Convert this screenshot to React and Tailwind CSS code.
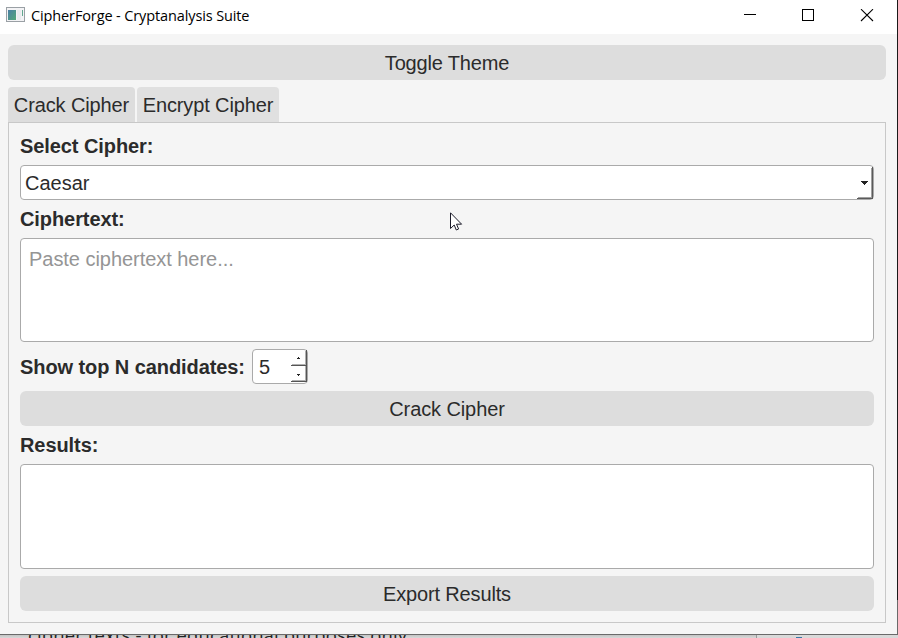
function Button({ children, className = '' }) {
  return (
    <button className={`flex h-[35px] w-full shrink-0 items-center justify-center rounded-[6px] bg-[#dddddd] pt-px text-[20px] leading-none ${className}`}>
      {children}
    </button>
  );
}

function Label({ children, className = '' }) {
  return <div className={`shrink-0 text-[20px] font-bold leading-[23px] tracking-[-0.08px] ${className}`}>{children}</div>;
}

function TitleBar() {
  return (
    <header className="flex h-[34px] shrink-0 items-start bg-white text-black">
      <svg className="ml-[6px] mt-[7px] shrink-0" width="19" height="16" shapeRendering="crispEdges">
        <defs>
          <linearGradient id="appIcon" x1="0" y1="0" x2="1" y2="1">
            <stop offset="0" stopColor="#4a7fa5" />
            <stop offset="1" stopColor="#52a878" />
          </linearGradient>
        </defs>
        <rect x="0.5" y="0.5" width="18" height="14" fill="#f3f3f5" stroke="#9aa0a5" />
        <rect x="2" y="3" width="8" height="10" fill="url(#appIcon)" />
        <rect x="11" y="3" width="4" height="10" fill="#e9ebee" />
        <rect x="16" y="3" width="1" height="6" fill="#62a890" />
      </svg>
      <div className="ml-[6px] mt-[6px] whitespace-nowrap font-['Open_Sans',sans-serif] text-[14.5px] leading-[20px] tracking-[-0.12px]">
        CipherForge - Cryptanalysis Suite
      </div>
      <svg className="ml-auto mr-[24px] mt-[9px] shrink-0" width="130" height="13" shapeRendering="crispEdges" fill="none" stroke="#000">
        <path d="M0 5.5H12" />
        <rect x="58.5" y="0.5" width="11" height="11" />
        <path d="M117 0.2L129 12M129 0.2L117 12" shapeRendering="auto" strokeWidth="1.1" />
      </svg>
    </header>
  );
}

export default function App() {
  return (
    <div className="flex h-[638px] w-[898px] flex-col overflow-hidden bg-[#e0e0e0] font-['Liberation_Sans',Arial,sans-serif] text-[#2b2b2b]">
      <div className="relative flex h-[635px] shrink-0 flex-col border-b border-[#6a6a6a] bg-[#f5f5f5]">
        <TitleBar />
        <main className="flex flex-1 flex-col pb-[11px] pl-[8px] pr-[12px] pt-[11px]">
          <Button className="tracking-[-0.17px]">Toggle Theme</Button>
          <nav className="mt-[7px] flex h-[35px] shrink-0 gap-[2px] text-[20px] leading-none tracking-[-0.12px]">
            <div className="flex w-[127px] items-center justify-center whitespace-nowrap rounded-t-[4px] bg-[#dddddd] pt-px">Crack Cipher</div>
            <div className="flex w-[142px] items-center justify-center whitespace-nowrap rounded-t-[4px] bg-[#e0e0e0] pt-px">Encrypt Cipher</div>
          </nav>
          <section className="flex flex-1 flex-col border border-[#c8c8c8] px-[11px] pt-[12px]">
            <Label>Select Cipher:</Label>
            <div className="mt-[7px] flex h-[35px] shrink-0 items-center rounded-[4px] border border-[#aaaaaa] bg-white pl-[4px] pt-px text-[20px] leading-none">
              Caesar
              <svg className="-mr-px -mt-px ml-auto shrink-0" width="17" height="33" shapeRendering="crispEdges">
                <path d="M4 15h7v1h-1v1h-1v1h-1v1h-1v-1h-1v-1h-1v-1h-1z" fill="#222" />
                <path d="M1 31.5H15M14.5 2V31" stroke="#a0a0a0" />
                <path d="M0 32.5H16M15.5 1V33" stroke="#5a5a5a" />
              </svg>
            </div>
            <Label className="mt-[8px]">Ciphertext:</Label>
            <div className="mt-[7px] h-[104px] shrink-0 rounded-[4px] border border-[#aaaaaa] bg-white pl-[8px] pt-[9px] text-[20px] leading-[23px] tracking-[-0.04px] text-[#959595]">
              Paste ciphertext here...
            </div>
            <div className="mt-[7px] flex h-[35px] shrink-0 items-center">
              <Label className="w-[232px] whitespace-nowrap pt-[2px]">Show top N candidates:</Label>
              <div className="flex h-[35px] w-[56px] items-center rounded-[4px] border border-[#aaaaaa] bg-white pl-[6px] text-[20px] leading-none">
                <span className="pt-px">5</span>
                <svg className="-mr-px ml-auto shrink-0" width="17" height="33" shapeRendering="crispEdges">
                  <path d="M7 7h1v1h1v1h-3v-1h1zM6 24h3v1h-1v1h-1v-1h-1z" fill="#222" />
                  <path d="M1 14.5H15M1 30.5H15M14.5 1V31" stroke="#b0b0b0" />
                  <path d="M0 15.5H16M0 31.5H16M15.5 0V32" stroke="#555" />
                </svg>
              </div>
            </div>
            <Button className="mt-[7px] tracking-[-0.1px]">Crack Cipher</Button>
            <Label className="mt-[8px]">Results:</Label>
            <div className="mt-[7px] h-[105px] shrink-0 rounded-[4px] border border-[#aaaaaa] bg-white" />
            <Button className="mt-[7px] tracking-[-0.15px]">Export Results</Button>
          </section>
        </main>
        <div className="absolute right-0 top-0 h-[600px] w-px bg-[#1a1a1a]" />
        <div className="absolute right-0 top-[600px] h-[35px] w-px bg-[#6a6a6a]" />
        <svg className="absolute left-[450px] top-[212px]" width="13" height="20">
          <path d="M0.5 0.8V16.5L4.2 13L6.3 18L8.6 17L6.5 12.2H11.6Z" fill="#fff" stroke="#1c1c2a" />
        </svg>
      </div>
      <div className="flex h-[3px] shrink-0 overflow-hidden">
        <div className="h-[3px] w-[757px] overflow-hidden border-r border-[#999] bg-gradient-to-b from-[#c4c4c4] to-[#d8d8d8] pl-[28px]">
          <div className="-mt-[10px] whitespace-pre font-['Open_Sans',sans-serif] text-[18.5px] leading-[20px] tracking-[0.12px] text-[#222]">cipher texts - for educational purposes only</div>
        </div>
        <div className="flex-1 bg-[#d9d9d9] pl-[39px] pt-[2px]">
          <div className="h-px w-[6px] bg-[#3878a8]" />
        </div>
      </div>
    </div>
  );
}
